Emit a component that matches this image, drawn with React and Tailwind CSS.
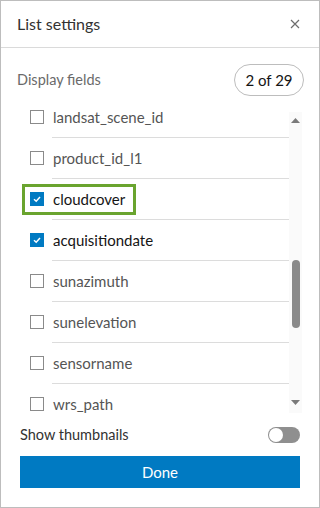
import React from "react";

const rows = [
  { name: "landsat_scene_id", checked: false },
  { name: "product_id_l1", checked: false },
  { name: "cloudcover", checked: true, highlight: true },
  { name: "acquisitiondate", checked: true },
  { name: "sunazimuth", checked: false },
  { name: "sunelevation", checked: false },
  { name: "sensorname", checked: false },
  { name: "wrs_path", checked: false },
];

function Box({ checked }) {
  if (checked) {
    return (
      <div className="w-[14px] h-[14px] bg-[#007ac2] flex items-center justify-center shrink-0">
        <svg width="10" height="10" viewBox="0 0 10 10">
          <path d="M2 5.2 L4.2 7.2 L8 3" stroke="white" strokeWidth="1.5" fill="none" />
        </svg>
      </div>
    );
  }
  return <div className="w-[14px] h-[14px] border border-[#8a8a8a] bg-white shrink-0" />;
}

export default function App() {
  const items = [];
  rows.forEach((r, i) => {
    if (i > 0) items.push(<div key={"s" + i} className="h-px bg-[#dcdcdc] ml-[32px]" />);
    items.push(
      <div key={r.name} className="h-[40px] flex items-center">
        <div
          className={
            "flex items-center h-[31px] " +
            (r.highlight ? "border-[3px] border-[#6aa42f] w-[114px] ml-[2px] pl-[5px]" : "pl-[10px]")
          }
        >
          <Box checked={r.checked} />
          <span className={"ml-[9px] text-[15px] " + (r.checked ? "text-[#151515]" : "text-[#555555]")}>
            {r.name}
          </span>
        </div>
      </div>
    );
  });

  return (
    <div
      className="w-[320px] h-[508px] bg-white border border-[#bdbdbd] flex flex-col text-[#323232]"
      style={{ fontFamily: "Lato, 'Open Sans', sans-serif" }}
    >
      <div className="h-[47px] border-b border-[#dadada] flex items-center justify-between pl-[16px] pr-[19px] shrink-0">
        <span className="text-[16px] text-[#323232]">List settings</span>
        <svg width="10" height="10" viewBox="0 0 10 10">
          <path d="M1 1 L9 9 M9 1 L1 9" stroke="#6e6e6e" strokeWidth="1.2" />
        </svg>
      </div>
      <div className="flex items-center justify-between pl-[16px] pr-[15px] mt-[16px] h-[32px] shrink-0">
        <span className="text-[14.5px] text-[#6a6a6a]">Display fields</span>
        <div className="w-[70px] h-[32px] rounded-full border border-[#bdbdbd] flex items-center justify-center text-[15px] text-[#151515]">
          2 of 29
        </div>
      </div>
      <div className="flex h-[305px] mt-[12px] pl-[19px] pr-[17px] shrink-0">
        <div className="flex-1 overflow-hidden">
          <div className="-mt-[11px]">{items}</div>
        </div>
        <div className="w-[13px] bg-[#fafafa] flex flex-col items-center mt-[4px]">
          <svg width="9" height="5" viewBox="0 0 9 5" className="mt-[6px]">
            <path d="M0 5 L4.5 0 L9 5 Z" fill="#7a7a7a" />
          </svg>
          <div className="w-[8px] h-[68px] rounded-full bg-[#8a8a8a] mt-[137px]" />
          <svg width="9" height="5" viewBox="0 0 9 5" className="mt-auto mb-[8px]">
            <path d="M0 0 L9 0 L4.5 5 Z" fill="#7a7a7a" />
          </svg>
        </div>
      </div>
      <div className="flex items-center justify-between px-[19px] mt-[13px] h-[18px] shrink-0">
        <span className="text-[14.5px] text-[#323232]">Show thumbnails</span>
        <div className="w-[32px] h-[16px] rounded-full bg-[#8f8f8f] flex items-center px-[1px]">
          <div className="w-[14px] h-[14px] rounded-full bg-white" />
        </div>
      </div>
      <div className="mx-[19px] mt-[12px] h-[32px] bg-[#007ac2] flex items-center justify-center text-white text-[15px] shrink-0">
        Done
      </div>
    </div>
  );
}
